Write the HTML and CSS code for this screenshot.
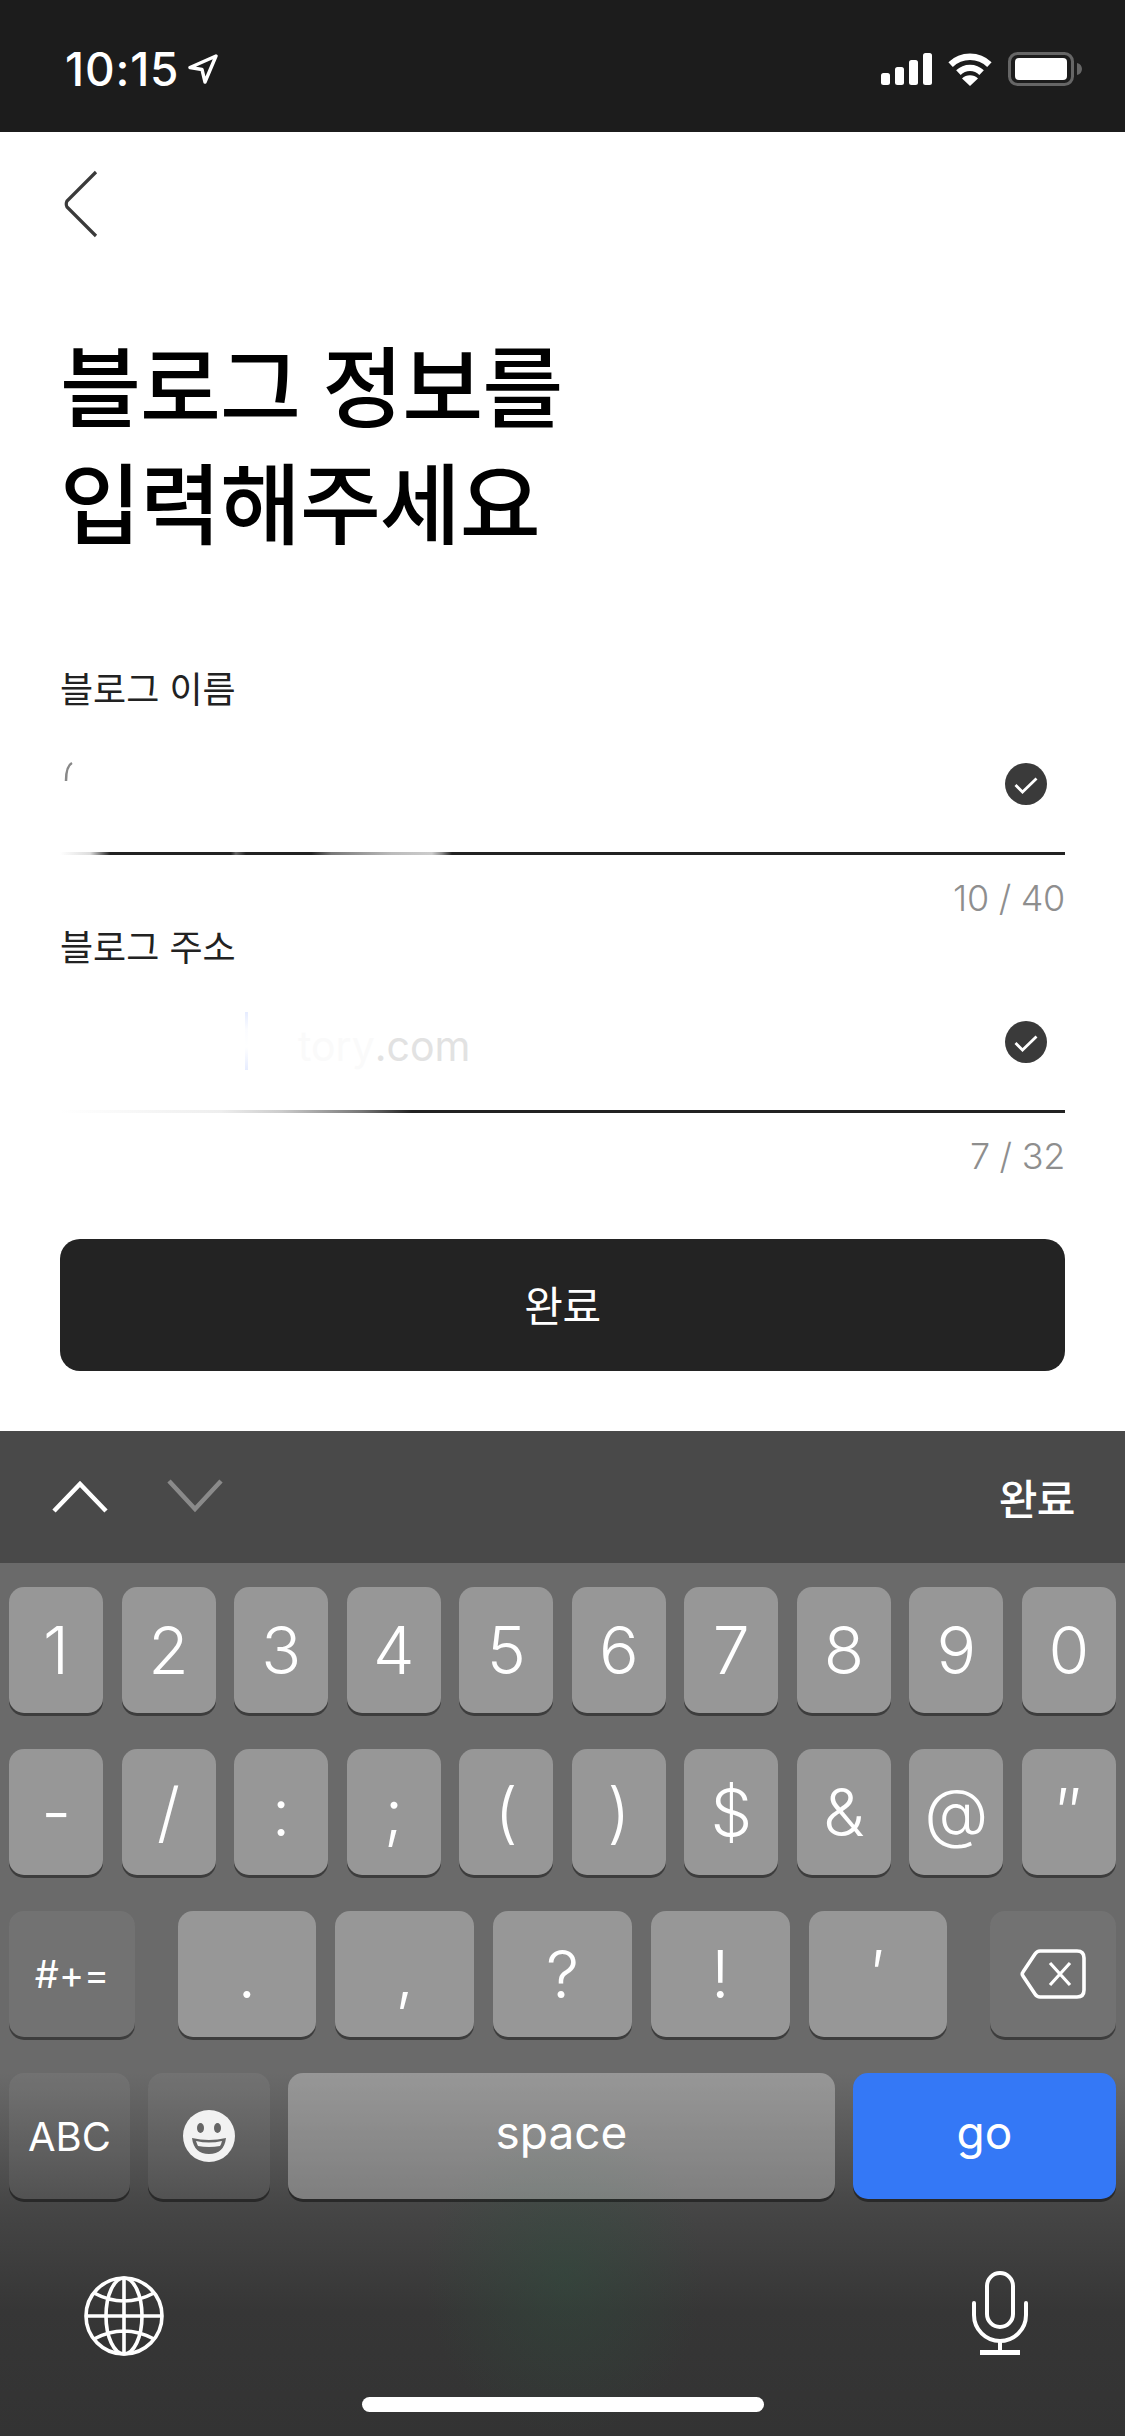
FILE: index.html
```html
<!DOCTYPE html>
<html lang="ko">
<head>
<meta charset="utf-8">
<title>블로그 정보를 입력해주세요</title>
<link rel="stylesheet" href="styles.css">
</head>
<body>
<div class="screen">
  <header class="status">
    <div class="status-left">
      <span class="time">10:15</span>
      <svg class="loc" width="30" height="30" viewBox="0 0 30 30"><path d="M28 2 2 13.500l12 2 3 12.500z" fill="none" stroke="#fff" stroke-width="3.400" stroke-linejoin="round"/></svg>
    </div>
    <div class="status-right">
      <svg class="signal" width="51" height="32" viewBox="0 0 51 32" fill="#fff"><rect x="0" y="20" width="9" height="12" rx="2.5"/><rect x="14" y="14" width="9" height="18" rx="2.5"/><rect x="28" y="7" width="9" height="25" rx="2.5"/><rect x="42" y="0" width="9" height="32" rx="2.5"/></svg>
      <svg class="wifi" width="46" height="33" viewBox="0 0 46 33" fill="none" stroke="#fff" stroke-width="6.4"><path d="M3.6 11.6a28 28 0 0 1 38.8 0"/><path d="M11.4 19.6a16.5 16.5 0 0 1 23.2 0"/><path d="M23 33 15 25.6a11.5 11.5 0 0 1 16 0z" fill="#fff" stroke="none"/></svg>
      <svg class="battery" width="74" height="34" viewBox="0 0 74 34"><rect x="1.5" y="1.5" width="63" height="31" rx="8" fill="none" stroke="#666" stroke-width="3"/><rect x="7" y="6" width="52" height="22" rx="4" fill="#fff"/><path d="M69 11c3 .6 5 3 5 6s-2 5.400-5 6z" fill="#666"/></svg>
    </div>
  </header>

  <main class="content">
    <button class="back" aria-label="뒤로">
      <svg width="34" height="68" viewBox="0 0 34 68"><path d="M32 2 3 31q-1.500 3 0 6l29 29" fill="none" stroke="#3a3a3a" stroke-width="3.200"/></svg>
    </button>
    <h1 class="title">블로그 정보를<br>입력해주세요</h1>

    <section class="field">
      <label class="label">블로그 이름</label>
      <div class="input">
        <div class="value">
          <svg class="trace" width="12" height="24" viewBox="0 0 12 24"><path d="M9 2Q3 5 3 20" fill="none" stroke="#888" stroke-width="2.500"/></svg>
        </div>
        <svg class="ok" width="42" height="42" viewBox="0 0 42 42"><circle cx="21" cy="21" r="21" fill="#3a3a3a"/><path d="m10.500 22 7 7 14-13.500" fill="none" stroke="#fff" stroke-width="2.800"/></svg>
      </div>
      <div class="rule rule-a"></div>
      <div class="count">10 / 40</div>
    </section>

    <section class="field">
      <label class="label">블로그 주소</label>
      <div class="input">
        <div class="value value-url"><i class="caret"></i><span class="ghost">tory</span><span class="dim">.com</span></div>
        <svg class="ok" width="42" height="42" viewBox="0 0 42 42"><circle cx="21" cy="21" r="21" fill="#3a3a3a"/><path d="m10.500 22 7 7 14-13.500" fill="none" stroke="#fff" stroke-width="2.800"/></svg>
      </div>
      <div class="rule rule-b"></div>
      <div class="count">7 / 32</div>
    </section>

    <button class="submit">완료</button>
  </main>

  <section class="keyboard">
    <div class="toolbar">
      <div class="arrows">
        <svg width="56" height="34" viewBox="0 0 56 34"><path d="M2 32 28 5l26 27" fill="none" stroke="#fff" stroke-width="4.500"/></svg>
        <svg width="56" height="34" viewBox="0 0 56 34"><path d="M2 2l26 28L54 2" fill="none" stroke="#8a8a8a" stroke-width="4.500"/></svg>
      </div>
      <span class="done">완료</span>
    </div>
    <div class="keys">
      <div class="row row-ten">
        <div class="key">1</div><div class="key">2</div><div class="key">3</div><div class="key">4</div><div class="key">5</div><div class="key">6</div><div class="key">7</div><div class="key">8</div><div class="key">9</div><div class="key">0</div>
      </div>
      <div class="row row-ten">
        <div class="key">-</div><div class="key">/</div><div class="key">:</div><div class="key">;</div><div class="key">(</div><div class="key">)</div><div class="key">$</div><div class="key">&amp;</div><div class="key">@</div><div class="key">″</div>
      </div>
      <div class="row row-mid">
        <div class="key fn small">#+=</div>
        <div class="punct">
          <div class="key">.</div><div class="key">,</div><div class="key">?</div><div class="key">!</div><div class="key">′</div>
        </div>
        <div class="key fn">
          <svg width="66" height="50" viewBox="0 0 66 50"><path d="M20 2h37q7 0 7 7v32q0 7-7 7H20q-3 0-5-3L3 27q-1.500-2 0-4L15 5q2-3 5-3z" fill="none" stroke="#fff" stroke-width="3.600"/><path d="m30 14 20 22m0-22L30 36" fill="none" stroke="#fff" stroke-width="3.200"/></svg>
        </div>
      </div>
      <div class="row row-last">
        <div class="key fn small abc">ABC</div>
        <div class="key fn emoji">
          <svg width="52" height="52" viewBox="0 0 52 52"><circle cx="26" cy="26" r="26" fill="#f2f2f2"/><ellipse cx="17.500" cy="18" rx="3.500" ry="5" fill="#666"/><ellipse cx="34.500" cy="18" rx="3.500" ry="5" fill="#666"/><path d="M9 28q17 4 34 0-2 16-17 16T9 28z" fill="#666"/><path d="M13 31q13 3 26 0-1 4-2 5-11 2-22 0-1-2-2-5z" fill="#f2f2f2"/></svg>
        </div>
        <div class="key space">space</div>
        <div class="key go">go</div>
      </div>
    </div>
    <div class="system">
      <svg class="globe" width="80" height="80" viewBox="0 0 80 80" fill="none" stroke="#fff" stroke-width="3.600"><circle cx="40" cy="40" r="38"/><ellipse cx="40" cy="40" rx="18" ry="38"/><path d="M40 2v76M2 40h76M10 17q30 16 60 0M10 63q30-16 60 0"/></svg>
      <svg class="mic" width="56" height="84" viewBox="0 0 56 84" fill="none" stroke="#fff" stroke-width="4"><rect x="15" y="2" width="26" height="54" rx="13"/><path d="M2 32v12a26 26 0 0 0 52 0V32" stroke-linecap="round"/><path d="M28 70v11"/><path d="M8 81.500h40" stroke-width="5"/></svg>
    </div>
    <div class="home"></div>
  </section>
</div>
</body>
</html>
```
FILE: styles.css
```css
* { box-sizing: border-box; }
html, body { margin: 0; padding: 0; background: #fff; }
body { font-family: "Inter", "Noto Sans CJK KR", sans-serif; }
.screen { width: 1125px; height: 2436px; overflow: hidden; display: flex; flex-direction: column; }

.status { height: 132px; flex: none; background: #1c1c1c; display: flex; justify-content: space-between; align-items: flex-start; padding: 52px 43px 0 65px; }
.status-left { display: flex; align-items: center; gap: 9px; height: 34px; }
.time { color: #fff; font-size: 46px; font-weight: 500; line-height: 34px; letter-spacing: .8px; }
.status-right { display: flex; align-items: center; height: 34px; }
.wifi { margin-left: 15px; }
.battery { margin-left: 15px; }

.content { flex: none; height: 1299px; padding: 38px 60px 0; display: flex; flex-direction: column; background: #fff; }
.back { width: 40px; height: 68px; padding: 0 0 0 2px; border: 0; background: none; display: block; flex: none; }
.title { margin: 92px 0 0; font-size: 88px; line-height: 117px; font-weight: 500; color: #000; letter-spacing: -1px; }

.field { display: flex; flex-direction: column; height: 258px; flex: none; }
.title + .field { margin-top: 101px; }
.label { font-size: 36px; line-height: 50px; height: 50px; color: #222; letter-spacing: 0; font-weight: 400; }
.input { height: 137px; display: flex; justify-content: space-between; align-items: center; }
.value { position: relative; flex: 1; height: 60px; display: flex; align-items: center; color: #eee; font-size: 41px; }
.trace { margin: -22px 0 0 3px; }
.value-url { padding: 8px 0 0 238px; }
.caret { position: absolute; left: 185px; top: 0; width: 3px; height: 58px; background: linear-gradient(#e6ecff, #fbfcff 30%, #fff 60%, #e6ecff); }
.ghost { color: #fafafa; }
.dim { color: #e2e2e2; }
.ok { flex: none; margin-right: 18px; }
.rule { height: 3px; flex: none; }
.rule-a { background: linear-gradient(90deg, #fff 0, #ddd 3%, #222 5%, #222 17%, #666 17.500%, #222 18.500%, #222 25%, #777 27%, #999 30%, #bbb 33%, #ccc 37%, #888 38%, #222 39%, #222 100%); }
.rule-b { background: linear-gradient(90deg, #fff 0, #eee 16%, #ccc 22%, #777 30%, #222 35%, #222 100%); }
.count { margin-top: 19px; text-align: right; color: #8e8e8e; font-size: 36px; line-height: 49px; font-weight: 300; letter-spacing: -.3px; }

.submit { flex: none; margin-top: 58px; height: 132px; width: 100%; border: 0; border-radius: 20px; background: #232323; color: #fff; font-family: inherit; font-size: 42px; letter-spacing: -.5px; padding: 0 0 4px; }

.keyboard { flex: 1; display: flex; flex-direction: column; position: relative; background:
  radial-gradient(ellipse 140px 160px at 565px 845px, rgba(46, 80, 62, .42), rgba(46, 80, 62, 0)),
  linear-gradient(#6a6a6a 0, #6a6a6a 642px, #464646 775px, #363636 880px, #333 1005px); }
.toolbar { height: 132px; flex: none; background: #494949; display: flex; justify-content: space-between; align-items: center; padding: 0 50px 2px 52px; }
.arrows { display: flex; gap: 59px; }
.done { color: #fff; font-size: 42px; font-weight: 500; letter-spacing: -.5px; }

.keys { padding: 24px 9px 0; display: flex; flex-direction: column; gap: 36px; flex: none; }
.row { height: 126px; display: flex; }
.row-ten { display: grid; grid-template-columns: repeat(10, 1fr); column-gap: 18.400px; }
.row-mid { justify-content: space-between; }
.punct { display: flex; gap: 19px; width: 770px; flex: none; }
.punct .key { flex: 1; }
.row-mid > .key { width: 126px; flex: none; }
.row-last { gap: 18px; }
.key { height: 126px; border-radius: 15px; background: rgba(255, 255, 255, .3); box-shadow: 0 3px 0 rgba(0, 0, 0, .42); display: flex; align-items: center; justify-content: center; color: #fff; font-size: 66px; font-weight: 300; }
.fn { background: rgba(255, 255, 255, .06); }
.small { font-size: 38px; font-weight: 400; }
.abc { width: 121px; flex: none; font-size: 40px; }
.emoji { width: 122px; flex: none; }
.space { width: 547px; flex: none; font-size: 46px; font-weight: 400; padding-bottom: 8px; }
.go { flex: 1; background: #3478f6; font-size: 46px; font-weight: 400; padding-bottom: 8px; }

.system { display: flex; justify-content: space-between; align-items: flex-start; padding: 72px 97px 0 84px; flex: none; }
.globe { margin-top: 5px; }
.home { position: absolute; left: 362px; top: 966px; width: 402px; height: 15px; border-radius: 8px; background: #fff; }
```
